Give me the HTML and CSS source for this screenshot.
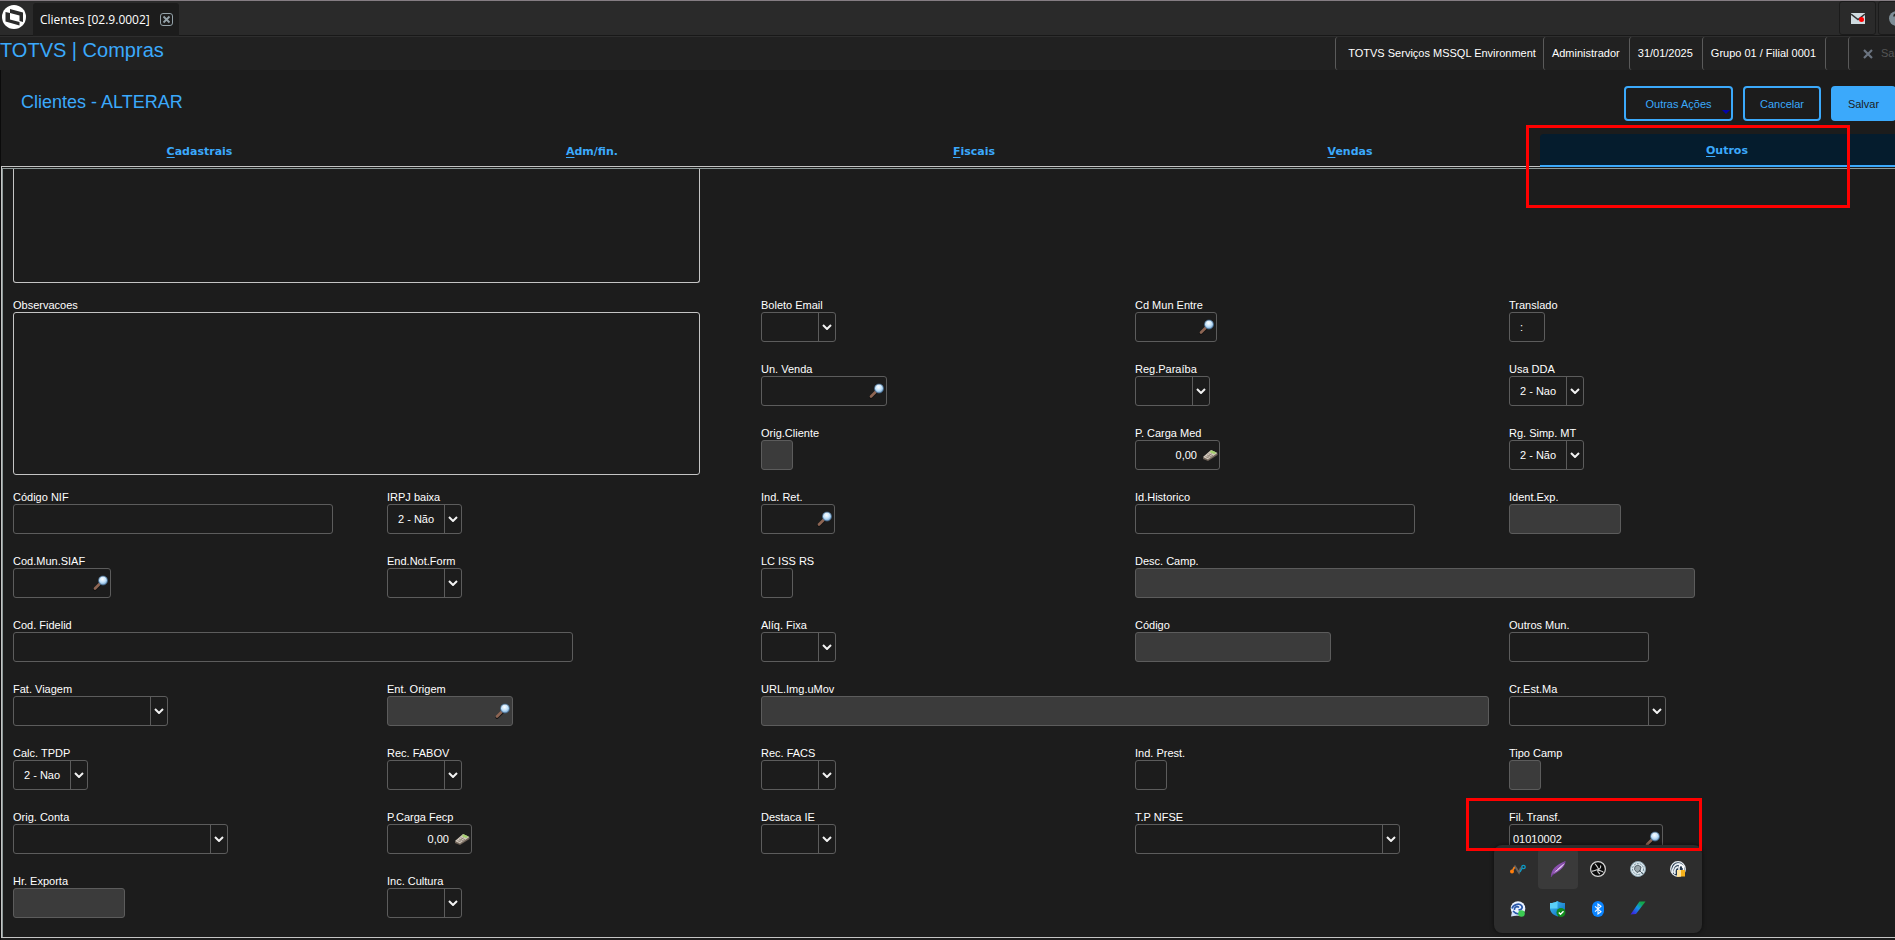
FILE: index.html
```html
<!DOCTYPE html>
<html lang="pt-BR">
<head>
    <meta charset="UTF-8">
    <meta name="viewport" content="width=device-width, initial-scale=1.0">
    <title>TOTVS | Compras - Clientes</title>
    <link rel="stylesheet" href="styles.css">
</head>
<body>

    <!-- Icones reutilizados nos campos -->
    <svg class="sprite" width="0" height="0" aria-hidden="true">
        <defs>
            <radialGradient id="lente" cx="0.45" cy="0.35" r="0.7">
                <stop offset="0" stop-color="#ffffff"/>
                <stop offset="0.5" stop-color="#c3e2fa"/>
                <stop offset="1" stop-color="#5f93c4"/>
            </radialGradient>
            <linearGradient id="caneta" x1="0" y1="1" x2="1" y2="0">
                <stop offset="0.1" stop-color="#3a22e0"/>
                <stop offset="0.5" stop-color="#1296e8"/>
                <stop offset="0.8" stop-color="#12a84c"/>
            </linearGradient>
            <linearGradient id="escudo" x1="0" y1="0" x2="1" y2="1">
                <stop offset="0" stop-color="#42c4f5"/>
                <stop offset="1" stop-color="#0a62bd"/>
            </linearGradient>
        </defs>
        <symbol id="i-seta" viewBox="0 0 10 6">
            <path d="M1 1l4 4 4-4" fill="none" stroke="#f2f2f2" stroke-width="2"/>
        </symbol>
        <symbol id="i-lupa" viewBox="0 0 16 16">
            <path d="M2 14.500L8 9" stroke="#141414" stroke-width="3" stroke-linecap="round"/>
            <path d="M2 13.500L6.500 9" stroke="#8d6553" stroke-width="2.600" stroke-linecap="round"/>
            <circle cx="10" cy="5.500" r="4.500" fill="url(#lente)" stroke="#3f6182" stroke-width="0.800"/>
        </symbol>
        <symbol id="i-calc" viewBox="0 0 16 12">
            <path d="M1 8.500v1.500l5 2 9.500-6V4.500z" fill="#6e6257"/>
            <path d="M1 8l8-7 6.500 3L6 10.500z" fill="#d2c8bc"/>
            <path d="M7.500 3L9.500 1.200l5 2.400-2.300 1.600z" fill="#a5cf6f"/>
            <path d="M3.500 7.500l4.500 2M5 6l4.700 2M6.500 4.700l4.700 2.100M4.500 9l5-4.400M7 10l4-3.400" stroke="#8b7f73" stroke-width="0.800"/>
        </symbol>
    </svg>

    <div class="page">
        <header class="topbar">
            <svg class="logo" viewBox="0 0 24 24" role="img" aria-label="TOTVS">
                <circle cx="12" cy="12" r="12" fill="#fff"/>
                <path d="M8 4l13 3.500V17l-3.500-1V10.500L8 8z" fill="#2b2b2b"/>
                <path d="M3.500 7L8 8v6.500l9.500 2.500v3.500L3.500 16.500z" fill="#2b2b2b"/>
            </svg>
            <div class="app-tab">
                <span>Clientes [02.9.0002]</span>
                <button type="button" class="close" aria-label="Fechar">
                    <svg viewBox="0 0 13 13">
                        <rect x="0.500" y="0.500" width="12" height="12" rx="2.500" fill="none" stroke="#93a1a8"/>
                        <path d="M3.500 3.500l6 6M9.500 3.500l-6 6" stroke="#93a1a8" stroke-width="1.800"/>
                    </svg>
                </button>
            </div>
            <div class="top-icons">
                <button type="button" aria-label="Mensagens">
                    <svg width="14" height="11" viewBox="0 0 14 11">
                        <path d="M0 0h14v11H0z" fill="#cfdbe0"/>
                        <path d="M0 1l7 5.500L14 1" fill="none" stroke="#333" stroke-width="1.500"/>
                        <circle cx="10.500" cy="6.500" r="2.500" fill="#f00"/>
                    </svg>
                </button>
                <button type="button" aria-label="Ajuda">
                    <svg width="15" height="15" viewBox="0 0 15 15">
                        <circle cx="7.500" cy="7.500" r="7.500" fill="#7f8e97"/>
                        <path d="M5 5.500a2.500 2.500 0 1 1 2.500 2.500v2M7.500 11v1.500" fill="none" stroke="#222" stroke-width="1.600"/>
                    </svg>
                </button>
            </div>
        </header>

        <div class="infobar">
            <h1>TOTVS | Compras</h1>
            <ul class="status">
                <li class="env">TOTVS Serviços MSSQL Environment</li>
                <li>Administrador</li>
                <li>31/01/2025</li>
                <li>Grupo 01 / Filial 0001</li>
                <li class="empty"></li>
                <li class="exit">
                    <button type="button" disabled>
                        <svg width="10" height="10" viewBox="0 0 10 10"><path d="M1 1l8 8M9 1L1 9" stroke="#6b7480" stroke-width="2.200"/></svg>
                        Sair
                    </button>
                </li>
            </ul>
        </div>

        <div class="heading">
            <h2>Clientes - ALTERAR</h2>
            <div class="actions">
                <button type="button" class="btn btn-more">Outras Ações</button>
                <button type="button" class="btn btn-cancel">Cancelar</button>
                <button type="submit" form="client-form" class="btn btn-save">Salvar</button>
            </div>
        </div>

        <nav class="tabs">
            <button type="button"><u>C</u>adastrais</button>
            <button type="button"><u>A</u>dm/fin.</button>
            <button type="button"><u>F</u>iscais</button>
            <button type="button"><u>V</u>endas</button>
            <button type="button" class="active"><u>O</u>utros</button>
        </nav>

        <main class="panel">
            <form id="client-form">
                <textarea class="memo memo-top" aria-label="Historico"></textarea>

                <div class="grid">
                    <div class="field memo-field">
                        <label for="observacoes">Observacoes</label>
                        <textarea id="observacoes" class="memo"></textarea>
                    </div>
                    <div class="field c3">
                        <label for="boleto">Boleto Email</label>
                        <div class="box combo"><select id="boleto"><option></option></select><span class="arrow"><svg><use href="#i-seta"/></svg></span></div>
                    </div>
                    <div class="field c4">
                        <label for="cdmun">Cd Mun Entre</label>
                        <div class="box w82"><input id="cdmun" type="text"><button type="button" aria-label="Pesquisar"><svg class="lupa"><use href="#i-lupa"/></svg></button></div>
                    </div>
                    <div class="field c5">
                        <label for="translado">Translado</label>
                        <div class="box w36"><input id="translado" class="indent" type="text" value=":"></div>
                    </div>

                    <div class="field c3">
                        <label for="unvenda">Un. Venda</label>
                        <div class="box w126"><input id="unvenda" type="text"><button type="button" aria-label="Pesquisar"><svg class="lupa"><use href="#i-lupa"/></svg></button></div>
                    </div>
                    <div class="field c4">
                        <label for="paraiba">Reg.Paraíba</label>
                        <div class="box combo"><select id="paraiba"><option></option></select><span class="arrow"><svg><use href="#i-seta"/></svg></span></div>
                    </div>
                    <div class="field c5">
                        <label for="dda">Usa DDA</label>
                        <div class="box combo"><select id="dda"><option>2 - Nao</option></select><span class="arrow"><svg><use href="#i-seta"/></svg></span></div>
                    </div>

                    <div class="field c3">
                        <label for="origcli">Orig.Cliente</label>
                        <div class="box off w32"><input id="origcli" type="text" disabled></div>
                    </div>
                    <div class="field c4">
                        <label for="cargamed">P. Carga Med</label>
                        <div class="box w85"><input id="cargamed" class="number" type="text" value="0,00"><button type="button" aria-label="Calculadora"><svg class="calc"><use href="#i-calc"/></svg></button></div>
                    </div>
                    <div class="field c5">
                        <label for="simpmt">Rg. Simp. MT</label>
                        <div class="box combo"><select id="simpmt"><option>2 - Não</option></select><span class="arrow"><svg><use href="#i-seta"/></svg></span></div>
                    </div>

                    <div class="field c1">
                        <label for="nif">Código NIF</label>
                        <div class="box w320"><input id="nif" type="text"></div>
                    </div>
                    <div class="field c2">
                        <label for="irpj">IRPJ baixa</label>
                        <div class="box combo"><select id="irpj"><option>2 - Não</option></select><span class="arrow"><svg><use href="#i-seta"/></svg></span></div>
                    </div>
                    <div class="field c3">
                        <label for="indret">Ind. Ret.</label>
                        <div class="box w74"><input id="indret" type="text"><button type="button" aria-label="Pesquisar"><svg class="lupa"><use href="#i-lupa"/></svg></button></div>
                    </div>
                    <div class="field c4">
                        <label for="idhist">Id.Historico</label>
                        <div class="box w280"><input id="idhist" type="text"></div>
                    </div>
                    <div class="field c5">
                        <label for="identexp">Ident.Exp.</label>
                        <div class="box off w112"><input id="identexp" type="text" disabled></div>
                    </div>

                    <div class="field c1">
                        <label for="siaf">Cod.Mun.SIAF</label>
                        <div class="box w98"><input id="siaf" type="text"><button type="button" aria-label="Pesquisar"><svg class="lupa"><use href="#i-lupa"/></svg></button></div>
                    </div>
                    <div class="field c2">
                        <label for="endnot">End.Not.Form</label>
                        <div class="box combo"><select id="endnot"><option></option></select><span class="arrow"><svg><use href="#i-seta"/></svg></span></div>
                    </div>
                    <div class="field c3">
                        <label for="lciss">LC ISS RS</label>
                        <div class="box w32"><input id="lciss" type="text"></div>
                    </div>
                    <div class="field c4">
                        <label for="desccamp">Desc. Camp.</label>
                        <div class="box off w560"><input id="desccamp" type="text" disabled></div>
                    </div>

                    <div class="field c1">
                        <label for="fidelid">Cod. Fidelid</label>
                        <div class="box w560"><input id="fidelid" type="text"></div>
                    </div>
                    <div class="field c3">
                        <label for="aliq">Alíq. Fixa</label>
                        <div class="box combo"><select id="aliq"><option></option></select><span class="arrow"><svg><use href="#i-seta"/></svg></span></div>
                    </div>
                    <div class="field c4">
                        <label for="codigo">Código</label>
                        <div class="box off w196"><input id="codigo" type="text" disabled></div>
                    </div>
                    <div class="field c5">
                        <label for="outrosmun">Outros Mun.</label>
                        <div class="box w140"><input id="outrosmun" type="text"></div>
                    </div>

                    <div class="field c1">
                        <label for="viagem">Fat. Viagem</label>
                        <div class="box combo w155"><select id="viagem"><option></option></select><span class="arrow"><svg><use href="#i-seta"/></svg></span></div>
                    </div>
                    <div class="field c2">
                        <label for="entorig">Ent. Origem</label>
                        <div class="box off w126"><input id="entorig" type="text" disabled><button type="button" aria-label="Pesquisar"><svg class="lupa"><use href="#i-lupa"/></svg></button></div>
                    </div>
                    <div class="field c3">
                        <label for="urlimg">URL.Img.uMov</label>
                        <div class="box off w728"><input id="urlimg" type="text" disabled></div>
                    </div>
                    <div class="field c5">
                        <label for="crest">Cr.Est.Ma</label>
                        <div class="box combo w157"><select id="crest"><option></option></select><span class="arrow"><svg><use href="#i-seta"/></svg></span></div>
                    </div>

                    <div class="field c1">
                        <label for="tpdp">Calc. TPDP</label>
                        <div class="box combo"><select id="tpdp"><option>2 - Nao</option></select><span class="arrow"><svg><use href="#i-seta"/></svg></span></div>
                    </div>
                    <div class="field c2">
                        <label for="fabov">Rec. FABOV</label>
                        <div class="box combo"><select id="fabov"><option></option></select><span class="arrow"><svg><use href="#i-seta"/></svg></span></div>
                    </div>
                    <div class="field c3">
                        <label for="facs">Rec. FACS</label>
                        <div class="box combo"><select id="facs"><option></option></select><span class="arrow"><svg><use href="#i-seta"/></svg></span></div>
                    </div>
                    <div class="field c4">
                        <label for="indprest">Ind. Prest.</label>
                        <div class="box w32"><input id="indprest" type="text"></div>
                    </div>
                    <div class="field c5">
                        <label for="tipocamp">Tipo Camp</label>
                        <div class="box off w32"><input id="tipocamp" type="text" disabled></div>
                    </div>

                    <div class="field c1">
                        <label for="origconta">Orig. Conta</label>
                        <div class="box combo w215"><select id="origconta"><option></option></select><span class="arrow"><svg><use href="#i-seta"/></svg></span></div>
                    </div>
                    <div class="field c2">
                        <label for="fecp">P.Carga Fecp</label>
                        <div class="box w85"><input id="fecp" class="number" type="text" value="0,00"><button type="button" aria-label="Calculadora"><svg class="calc"><use href="#i-calc"/></svg></button></div>
                    </div>
                    <div class="field c3">
                        <label for="destaca">Destaca IE</label>
                        <div class="box combo"><select id="destaca"><option></option></select><span class="arrow"><svg><use href="#i-seta"/></svg></span></div>
                    </div>
                    <div class="field c4">
                        <label for="nfse">T.P NFSE</label>
                        <div class="box combo w265"><select id="nfse"><option></option></select><span class="arrow"><svg><use href="#i-seta"/></svg></span></div>
                    </div>
                    <div class="field c5">
                        <label for="filtransf">Fil. Transf.</label>
                        <div class="box w154"><input id="filtransf" type="text" value="01010002"><button type="button" aria-label="Pesquisar"><svg class="lupa"><use href="#i-lupa"/></svg></button></div>
                    </div>

                    <div class="field c1">
                        <label for="exporta">Hr. Exporta</label>
                        <div class="box off w112"><input id="exporta" type="text" disabled></div>
                    </div>
                    <div class="field c2">
                        <label for="cultura">Inc. Cultura</label>
                        <div class="box combo"><select id="cultura"><option></option></select><span class="arrow"><svg><use href="#i-seta"/></svg></span></div>
                    </div>
                </div>
            </form>
        </main>

        <!-- Icones ocultos da bandeja do sistema -->
        <div class="tray">
            <button type="button" aria-label="Monitor">
                <svg viewBox="0 0 16 16">
                    <path d="M2 10L5 5.500l4 6 2-5" fill="none" stroke="#66605c" stroke-width="2"/>
                    <circle cx="2" cy="10.500" r="2" fill="#ff7d0a"/>
                    <path d="M3 9l1.500-3" stroke="#ff7d0a" stroke-width="1.500"/>
                    <circle cx="13.500" cy="6" r="1.700" fill="none" stroke="#0d9bc6" stroke-width="1.300"/>
                    <path d="M10 11l2-3.500" stroke="#0d9bc6" stroke-width="1.400"/>
                </svg>
            </button>
            <button type="button" class="selected" aria-label="Pena">
                <svg viewBox="0 0 16 16">
                    <path d="M1 16C1 8 6 4 15.500 0c0 5-4 9-13 14z" fill="#8a4fae"/>
                    <path d="M1 15.500C4 10 8 6 14.500 2c-1.500 4-6 7-12 11" fill="#e3c3f3"/>
                    <path d="M1 16C5 9 9 6 15 1" fill="none" stroke="#6f3b93" stroke-width="0.900"/>
                </svg>
            </button>
            <button type="button" aria-label="OBS">
                <svg viewBox="0 0 16 16">
                    <circle cx="8" cy="8" r="7.400" fill="#0a0a0a" stroke="#d6d6d6" stroke-width="1.200"/>
                    <path d="M8.500 8.500C8 5.500 6.500 5 5 2.700M8 8.500C5.500 9 4.500 10.500 1.800 10M8 8.500c2 2 4.500 1 5.500 3M8 8.500C10.500 8 11 6 10.500 4.500M8 8.500c-1 2.500.5 3.500 2 4.500" fill="none" stroke="#d6d6d6" stroke-width="1.100"/>
                </svg>
            </button>
            <button type="button" aria-label="Rede">
                <svg viewBox="0 0 16 16">
                    <circle cx="8" cy="8" r="7.500" fill="#dfeaf0" stroke="#8fa8b5"/>
                    <circle cx="8" cy="8" r="5.500" fill="none" stroke="#6d8b99" stroke-dasharray="2 1"/>
                    <path d="M5 5.500l3-1.500 3 2-1 4-3 1.500-2.500-3zM9 9l4 4" fill="#98a5ab" stroke="#46545b" stroke-width="0.900"/>
                </svg>
            </button>
            <button type="button" aria-label="VPN">
                <svg viewBox="0 0 16 16">
                    <circle cx="8" cy="8" r="7.300" fill="#22364c" stroke="#e8eef2" stroke-width="1.300"/>
                    <path d="M3 12C1.500 7 5 3 8 3s5 2 5 4M5 13c-1-4 .5-6.500 3-7" fill="none" stroke="#e8eef2" stroke-width="1.800"/>
                    <path d="M9 9V6.500a2.200 2.200 0 0 1 4.500 0V9" fill="none" stroke="#fff" stroke-width="1.500"/>
                    <path d="M7 9h8v6.500H7z" fill="#f7b21b"/>
                    <path d="M7 9h4v6.500H7z" fill="#ffe29a"/>
                </svg>
            </button>
            <button type="button" aria-label="Chat">
                <svg viewBox="0 0 16 16">
                    <circle cx="8" cy="7.500" r="7.300" fill="#e9f2ff"/>
                    <path d="M1 15.500l1-5 5 4z" fill="#cfe0fa"/>
                    <path d="M2 7.500C3 3.500 9 2 11.500 4.500c2 2.500-1 5-3 4M4.500 9C4 6 7 4.500 9 6.500M3 10c3 3.500 6 3 8 2" fill="none" stroke="#2756a8" stroke-width="1.700"/>
                    <circle cx="11.500" cy="12.500" r="3.300" fill="#3ccb52"/>
                </svg>
            </button>
            <button type="button" aria-label="Segurança do Windows">
                <svg viewBox="0 0 16 16">
                    <path d="M7.500 0C9.500 1.500 12 2 15 2v5c0 4-3 7-7.500 8.500C3 14 0 11 0 7V2c3 0 5.500-.5 7.500-2z" fill="url(#escudo)"/>
                    <path d="M7.500 0v7.500H0V2c3 0 5.500-.5 7.500-2z" fill="#5bd0f7"/>
                    <circle cx="11" cy="11.500" r="4.500" fill="#128a1d"/>
                    <path d="M8.800 11.500l1.700 1.700 3-3" fill="none" stroke="#fff" stroke-width="1.400"/>
                </svg>
            </button>
            <button type="button" aria-label="Bluetooth">
                <svg viewBox="0 0 16 16">
                    <rect x="2" width="12" height="16" rx="6" fill="#0a84ff"/>
                    <path d="M5 5.300l6 5.400L8 13V3l3 2.300-6 5.400" fill="none" stroke="#fff" stroke-width="1.100"/>
                </svg>
            </button>
            <button type="button" aria-label="Caneta">
                <svg viewBox="0 0 16 16"><path d="M0.500 13.500L9.500 0.500h6L6 13z" fill="url(#caneta)"/></svg>
            </button>
        </div>

        <!-- Destaques -->
        <div class="mark mark-tab"></div>
        <div class="mark mark-field"></div>
    </div>

</body>
</html>
```

FILE: styles.css
```css
/* Reset */
* {
    margin: 0;
    padding: 0;
    box-sizing: border-box;
}

body {
    font-family: "Liberation Sans", Arial, sans-serif;
    font-size: 11px;
    background-color: #0b0b0b;
    color: #fff;
}

button, input, select, textarea {
    font: inherit;
    color: inherit;
    background: none;
    border: none;
    outline: none;
}

button {
    cursor: pointer;
}

.sprite {
    position: absolute;
}

.page {
    position: relative;
    display: flex;
    flex-direction: column;
    min-height: 100vh;
    padding-bottom: 2px;
    overflow: hidden;
    background: linear-gradient(#1c1c1c, #1c1c1c) no-repeat 1px 0;
}

/* Barra superior */
.topbar {
    display: flex;
    align-items: stretch;
    height: 37px;
    border-top: 1px solid #857d83;
    border-bottom: 1px solid #2e2e2e;
    background-color: #2a2a2a;
    box-shadow: inset 0 -1px #181818;
}

.logo {
    width: 24px;
    height: 24px;
    margin: 4px 7px 0 2px;
}

.app-tab {
    display: flex;
    align-items: center;
    justify-content: space-between;
    width: 146px;
    margin-top: 2px;
    padding: 0 6px 0 7px;
    border-radius: 3px 3px 0 0;
    background-color: #1c1c1c;
    font-family: "Open Sans", "Noto Sans", sans-serif;
    font-size: 12px;
    font-weight: 500;
    white-space: nowrap;
}

.close,
.close svg {
    display: block;
    width: 13px;
    height: 13px;
}

.top-icons {
    display: flex;
    gap: 2px;
    margin: 0 -20px 0 auto;
}

.top-icons button {
    display: flex;
    align-items: center;
    justify-content: center;
    width: 37px;
    height: 34px;
    border: 1px solid #1b1b1b;
    border-radius: 3px;
}

/* Barra de informacoes */
.infobar {
    display: flex;
    justify-content: space-between;
    height: 33px;
    background-color: #212121;
}

h1 {
    font-size: 20px;
    font-weight: 400;
    line-height: 26px;
    color: #3ba9fb;
}

.status {
    display: flex;
    list-style: none;
    line-height: 33px;
    white-space: nowrap;
}

.status li {
    padding: 0 9px 0 8px;
    border-left: 1px solid #5a5a5a;
    border-radius: 3px;
}

.status .env {
    padding: 0 7px 0 12px;
}

.status .empty {
    width: 23px;
}

.status .exit {
    width: 47px;
    padding-left: 14px;
    overflow: hidden;
}

.exit button {
    display: flex;
    align-items: center;
    gap: 8px;
    height: 33px;
    color: #555;
}

/* Titulo e acoes */
.heading {
    display: flex;
    justify-content: space-between;
    height: 64px;
    padding: 16px 0 0 21px;
}

h2 {
    font-size: 18px;
    font-weight: 400;
    line-height: 32px;
    color: #3ba9fb;
}

.actions {
    display: flex;
    gap: 10px;
    margin-right: -1px;
}

.btn {
    position: relative;
    height: 35px;
    border: 2px solid #3ba9fb;
    border-radius: 4px;
    color: #3ba9fb;
}

.btn-more {
    width: 109px;
}

.btn-more::after {
    content: "";
    position: absolute;
    right: 1px;
    bottom: 5px;
    border: 4px solid transparent;
    border-top-color: #0303a8;
    border-bottom: 0;
}

.btn-cancel {
    width: 78px;
}

.btn-save {
    width: 65px;
    background-color: #3ba9fb;
    color: #1c1c1c;
}

/* Abas */
.tabs {
    position: relative;
    z-index: 1;
    display: grid;
    grid-template-columns: 393fr 392fr 372fr 380fr 374fr;
    height: 33px;
    margin: 0 -19px -1px 3px;
    font-family: "DejaVu Sans", Verdana, sans-serif;
    font-weight: 700;
    color: #3ba9fb;
}

.tabs button {
    padding-top: 2px;
}

.tabs u {
    text-underline-offset: 2px;
}

.tabs .active {
    border-bottom: 2px solid #3ba9fb;
    border-radius: 4px 4px 0 0;
    background-color: #051c2d;
}

/* Painel do formulario */
.panel {
    display: flex;
    flex: 1;
    margin-left: 1px;
    padding-top: 1px;
    border: 1px solid #c4c4c4;
    border-right: 0;
    background-color: #1c1c1c;
}

#client-form {
    flex: 1;
    padding: 0 12px 10px 10px;
    border-top: 1px solid #8d9998;
    border-left: 1px solid #8d9998;
}

.grid {
    display: grid;
    grid-template-columns: repeat(5, minmax(0, 1fr));
    grid-auto-rows: 44px;
    row-gap: 20px;
}

.c1 { grid-column: 1; }
.c2 { grid-column: 2; }
.c3 { grid-column: 3; }
.c4 { grid-column: 4; }
.c5 { grid-column: 5; }

.field label {
    display: block;
    line-height: 14px;
    white-space: nowrap;
}

.memo-field {
    grid-column: 1 / 3;
    grid-row: 1 / 4;
}

.memo {
    display: block;
    width: 687px;
    height: 163px;
    border: 1px solid #c4c4c4;
    border-radius: 3px;
    resize: none;
}

.memo-top {
    height: 114px;
    margin-bottom: 15px;
    border-top: 0;
    border-radius: 0 0 3px 3px;
}

/* Caixas dos campos */
.box {
    position: relative;
    display: flex;
    align-items: center;
    height: 30px;
    border: 1px solid #5c5c5c;
    border-radius: 3px;
}

.box input,
.box select {
    flex: 1;
    min-width: 0;
    height: 100%;
    padding-left: 3px;
}

.box .indent {
    padding-left: 10px;
}

.box .number {
    padding-right: 5px;
    text-align: right;
}

.off {
    background-color: #3b3b3b;
}

.box button,
.box button svg {
    display: block;
}

.lupa {
    width: 16px;
    height: 16px;
    margin-right: 1px;
}

.calc {
    width: 16px;
    height: 12px;
    margin-right: 1px;
}

.combo {
    width: 75px;
}

.box select {
    appearance: none;
    padding-left: 10px;
}

.arrow {
    position: absolute;
    top: 0;
    right: 0;
    bottom: 0;
    display: flex;
    align-items: center;
    justify-content: center;
    width: 17px;
    border-left: 1px solid #5c5c5c;
    pointer-events: none;
}

.arrow svg {
    width: 10px;
    height: 6px;
}

/* Larguras conforme o tamanho do campo */
.w32 { width: 32px; }
.w36 { width: 36px; }
.w74 { width: 74px; }
.w82 { width: 82px; }
.w85 { width: 85px; }
.w98 { width: 98px; }
.w112 { width: 112px; }
.w126 { width: 126px; }
.w140 { width: 140px; }
.w154 { width: 154px; }
.w155 { width: 155px; }
.w157 { width: 157px; }
.w196 { width: 196px; }
.w215 { width: 215px; }
.w265 { width: 265px; }
.w280 { width: 280px; }
.w320 { width: 320px; }
.w560 { width: 560px; }
.w728 { width: 728px; }

/* Bandeja do sistema */
.tray {
    position: absolute;
    top: 845px;
    right: 193px;
    z-index: 2;
    display: grid;
    grid-template-columns: repeat(5, 40px);
    grid-auto-rows: 40px;
    padding: 4px;
    border-radius: 8px;
    background-color: #2d2d2d;
    box-shadow: 0 0 4px rgba(0, 0, 0, 0.6);
}

.tray button {
    display: flex;
    align-items: center;
    justify-content: center;
    border-radius: 4px;
}

.tray .selected {
    background-color: #3a3a3a;
}

.tray svg {
    width: 16px;
    height: 16px;
}

/* Destaques em vermelho */
.mark {
    position: absolute;
    z-index: 3;
    border: 3px solid #f00;
    pointer-events: none;
}

.mark-tab {
    top: 125px;
    right: 45px;
    width: 324px;
    height: 83px;
}

.mark-field {
    top: 798px;
    right: 193px;
    width: 236px;
    height: 53px;
}
```
